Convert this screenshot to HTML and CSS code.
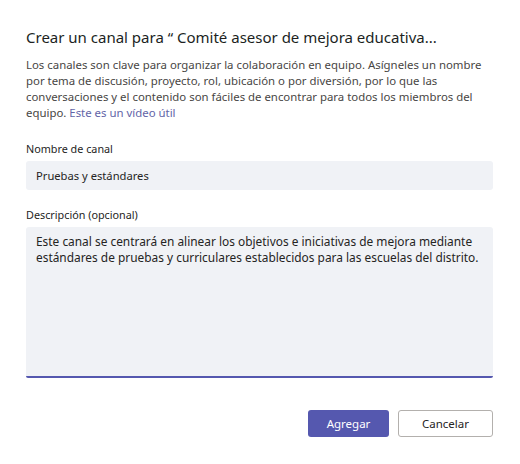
FILE: index.html
```html
<!DOCTYPE html>
<html lang="es">
<head>
<meta charset="utf-8">
<link rel="stylesheet" href="styles.css">
</head>
<body>
<div class="dialog">
  <h1 class="title">Crear un canal para “ Comité asesor de mejora educativa...</h1>
  <p class="intro"><span>Los canales son clave para organizar la colaboración en equipo. Asígneles un nombre por tema de discusión, proyecto, rol, ubicación o por diversión, por lo que las conversaciones y el contenido son fáciles de encontrar para todos los miembros del equipo.</span> <a class="link" href="#">Este es un vídeo útil</a></p>
  <div class="field">
    <div class="label">Nombre de canal</div>
    <div class="input">Pruebas y estándares</div>
  </div>
  <div class="field field-desc">
    <div class="label">Descripción (opcional)</div>
    <div class="textarea">Este canal se centrará en alinear los objetivos e iniciativas de mejora mediante estándares de pruebas y curriculares establecidos para las escuelas del distrito.</div>
  </div>
  <div class="actions">
    <button class="btn btn-primary">Agregar</button>
    <button class="btn btn-secondary">Cancelar</button>
  </div>
</div>
</body>
</html>
```

FILE: styles.css
```css
* { box-sizing: border-box; }
html, body {
  margin: 0;
  padding: 0;
  background: #ffffff;
}
body {
  font-family: "Noto Sans", "Open Sans", sans-serif;
  color: #252423;
}
.dialog {
  padding: 25px 27px 0 26px;
}
.title {
  margin: 0;
  font-size: 15px;
  font-weight: 400;
  line-height: 24px;
  color: #201f1e;
}
.intro {
  margin: 8px 0 0;
  font-size: 11.4px;
  line-height: 16px;
  color: #484644;
}
.link {
  color: #6264a7;
  text-decoration: none;
}
.field {
  margin-top: 21px;
}
.field-desc {
  margin-top: 18px;
}
.label {
  font-size: 10.8px;
  line-height: 14px;
  color: #252423;
  margin-bottom: 5px;
}
.input {
  height: 29px;
  background: #f0f2f6;
  border-radius: 3px;
  padding: 0 10px;
  font-size: 11.2px;
  line-height: 29px;
  color: #252423;
}
.textarea {
  height: 151px;
  background: #f0f2f6;
  border-radius: 3px 3px 2px 2px;
  border-bottom: 2px solid #5558af;
  padding: 6px 10px;
  font-size: 11.9px;
  line-height: 16px;
  color: #252423;
}
.actions {
  display: flex;
  justify-content: flex-end;
  gap: 9px;
  margin-top: 32px;
}
.btn {
  height: 27px;
  font-family: inherit;
  font-size: 11.5px;
  border-radius: 3px;
  padding: 0;
}
.btn-primary {
  width: 81px;
  background: #5558af;
  color: #ffffff;
  border: 0;
}
.btn-secondary {
  width: 95px;
  background: #ffffff;
  color: #252423;
  border: 1px solid #b3b0ad;
}
```
